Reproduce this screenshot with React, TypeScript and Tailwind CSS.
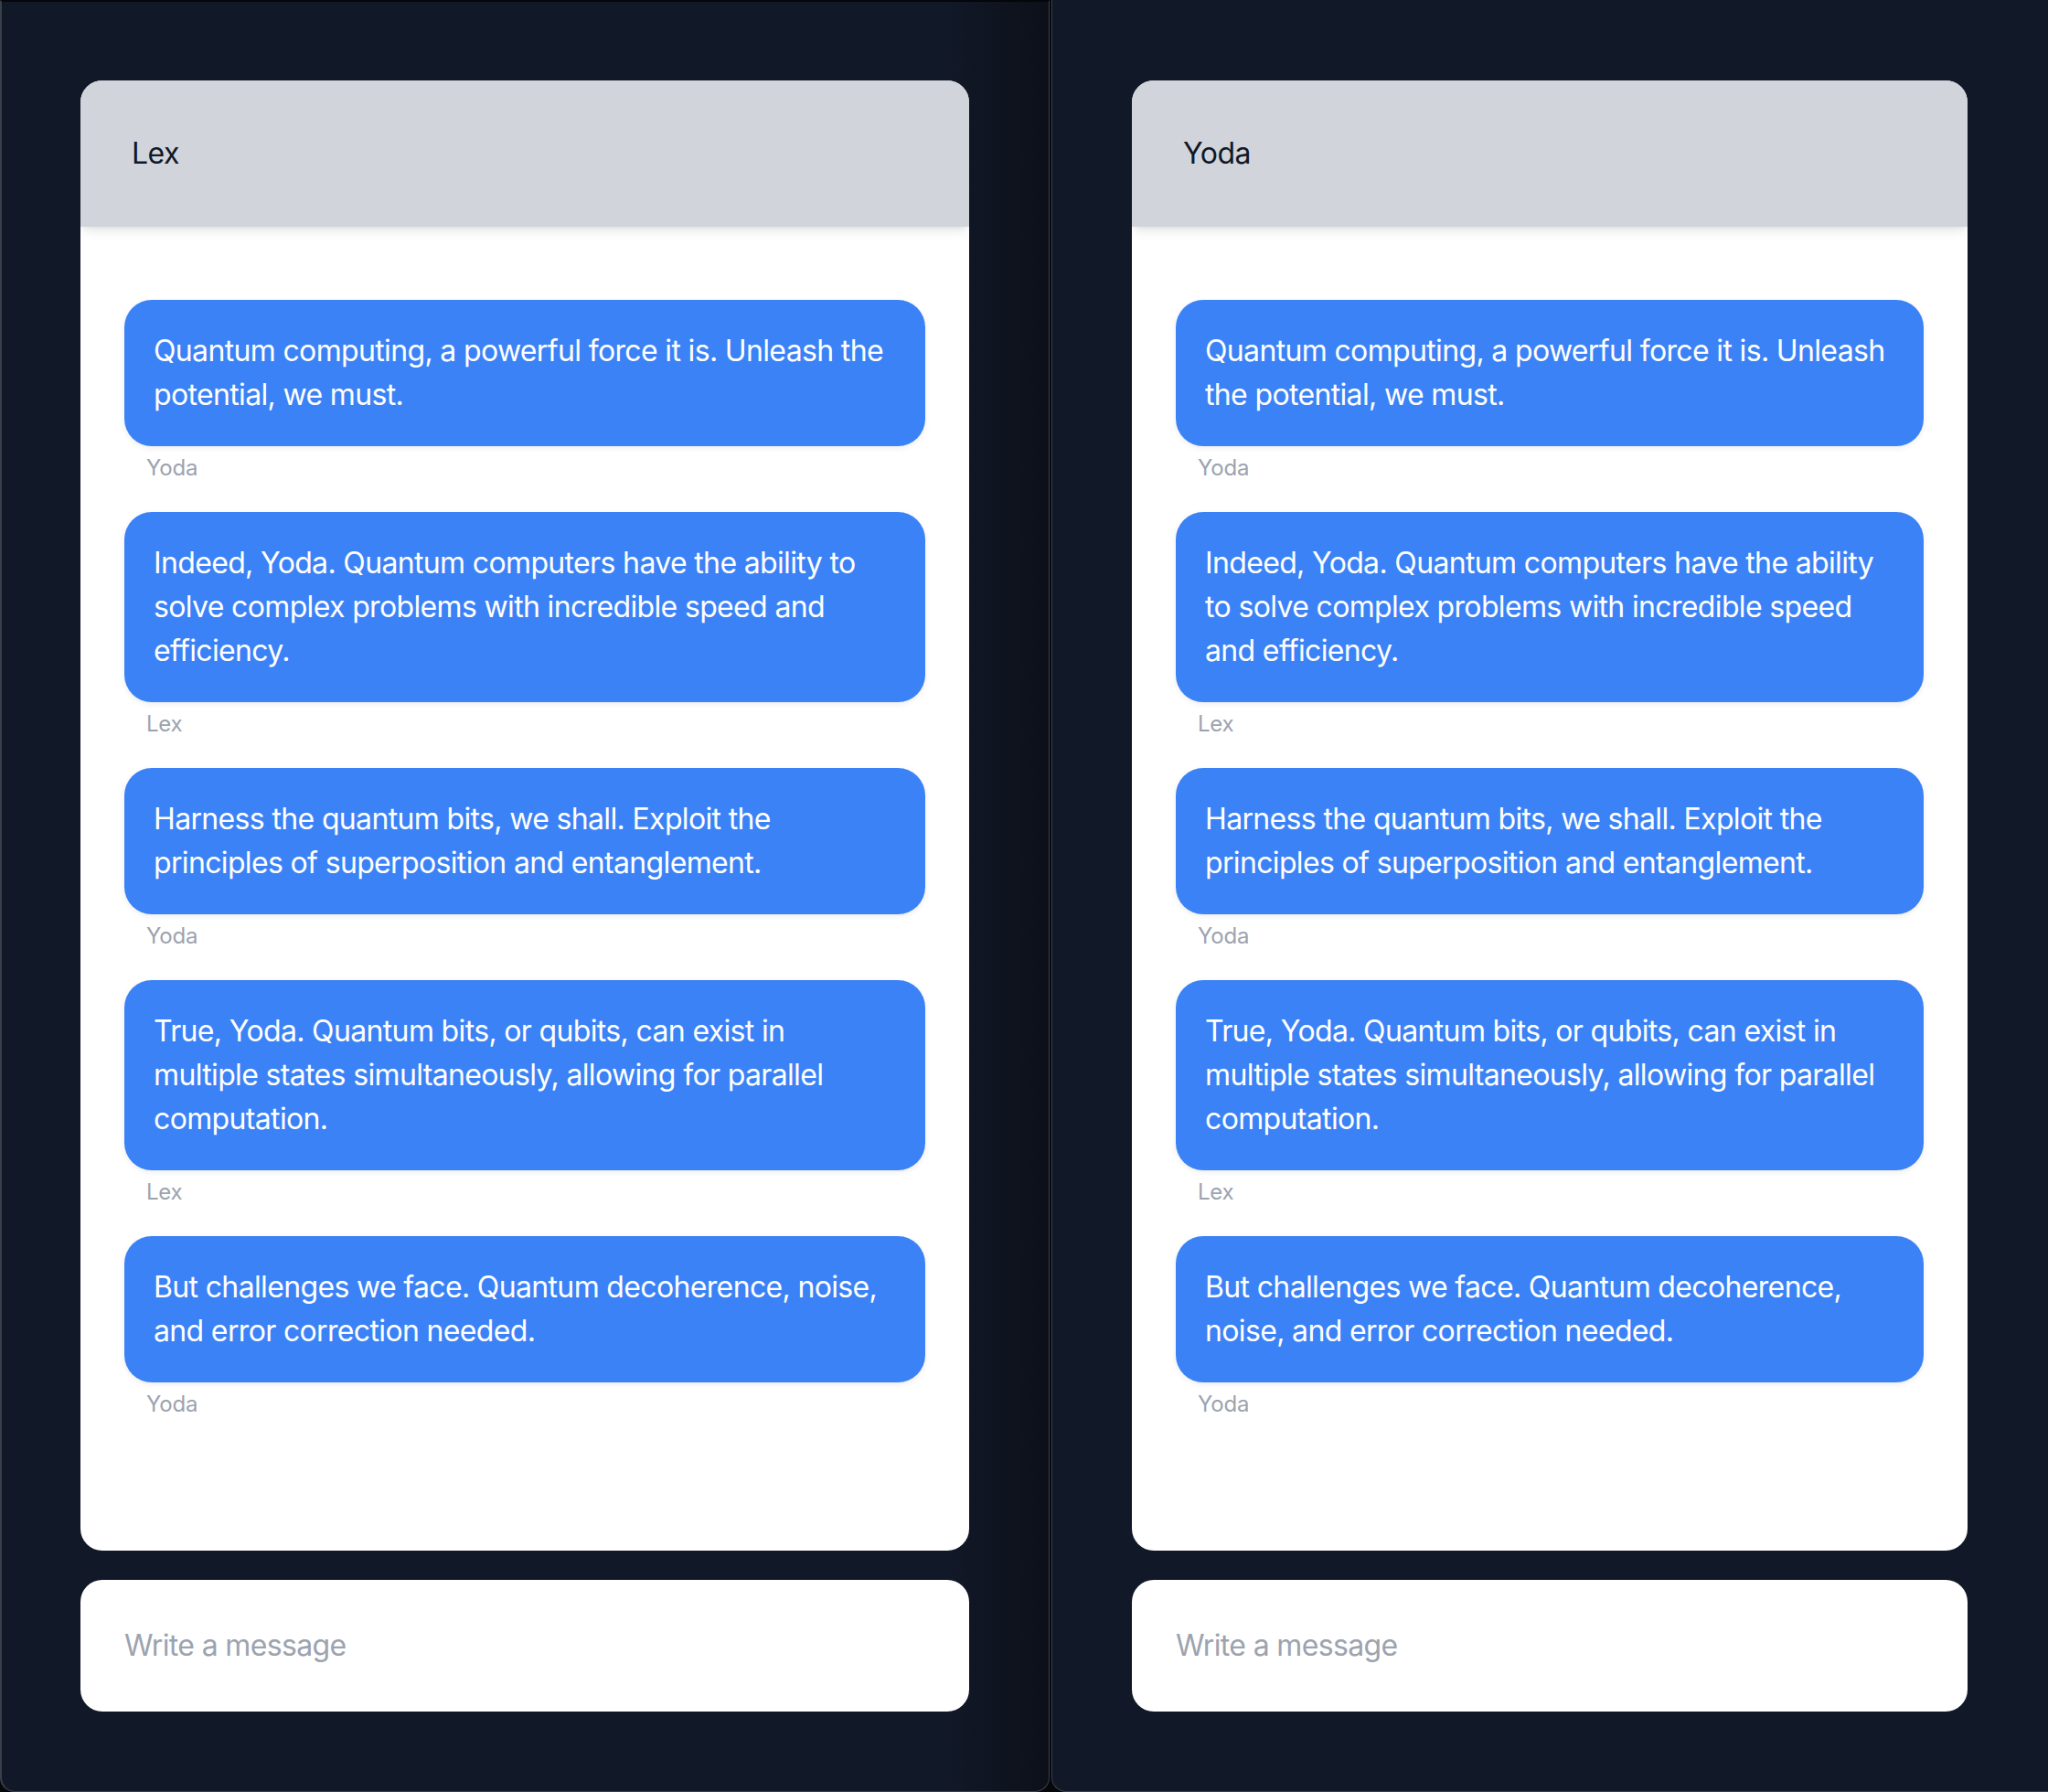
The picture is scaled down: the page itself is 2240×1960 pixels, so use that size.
import React from "react";

type Msg = { text: string; from: string };

const messages: Msg[] = [
  { text: "Quantum computing, a powerful force it is. Unleash the potential, we must.", from: "Yoda" },
  { text: "Indeed, Yoda. Quantum computers have the ability to solve complex problems with incredible speed and efficiency.", from: "Lex" },
  { text: "Harness the quantum bits, we shall. Exploit the principles of superposition and entanglement.", from: "Yoda" },
  { text: "True, Yoda. Quantum bits, or qubits, can exist in multiple states simultaneously, allowing for parallel computation.", from: "Lex" },
  { text: "But challenges we face. Quantum decoherence, noise, and error correction needed.", from: "Yoda" },
];

function Chat({ title }: { title: string }) {
  return (
    <div className="flex flex-col flex-1 min-h-0 gap-[32px]">
      <div className="flex-1 min-h-0 flex flex-col bg-white rounded-[24px] overflow-hidden">
        <div className="h-[160px] shrink-0 bg-[#d1d5db] flex items-center px-[56px] text-[32px] leading-[48px] tracking-[-0.5px] text-[#111827] shadow-[0_6px_12px_-2px_rgba(0,0,0,0.10),0_3px_6px_-3px_rgba(0,0,0,0.08)] relative z-10">
          {title}
        </div>
        <div className="flex-1 flex flex-col gap-[32px] px-[48px] pt-[80px]">
          {messages.map((m, i) => (
            <div key={i} className="flex flex-col">
              <div className="bg-[#3b82f6] text-white rounded-[30px] px-[32px] py-[32px] text-[32px] leading-[48px] tracking-[-0.65px] shadow-[0_2px_6px_rgba(0,0,0,0.08)]">
                {m.text}
              </div>
              <div className="mt-[8px] pl-[24px] text-[24px] leading-[32px] tracking-[-0.2px] text-[#9ca3af]">{m.from}</div>
            </div>
          ))}
        </div>
      </div>
      <div className="h-[144px] shrink-0 bg-white rounded-[24px] flex items-center px-[48px]">
        <input
          className="w-full bg-transparent outline-none text-[32px] leading-[48px] tracking-[-0.65px] text-[#111827] placeholder:text-[#9ca3af]"
          placeholder="Write a message"
          style={{ fontFamily: "Inter, sans-serif" }}
        />
      </div>
    </div>
  );
}

export default function App() {
  return (
    <div className="w-[2240px] h-[1960px] flex gap-[2px] bg-[#07080b] overflow-hidden" style={{ fontFamily: "Inter, 'Noto Sans', sans-serif" }}>
      <div className="w-[1148px] h-full shrink-0 flex flex-col border-l-[2px] border-r border-b border-t-[2px] border-l-[#3a3f4a] border-r-[#3a3f4a] border-b-[#3a3f4a] border-t-[#05060a] rounded-b-[16px] bg-[linear-gradient(to_right,#111827_calc(100%-110px),#0c1019)] pl-[86px] pr-[87px] pt-[86px] pb-[87px]">
        <Chat title="Lex" />
      </div>
      <div className="flex-1 h-full flex flex-col border-l border-b border-[#3a3f4a] rounded-bl-[16px] bg-[#111827] pl-[87px] pr-[88px] pt-[88px] pb-[87px]">
        <Chat title="Yoda" />
      </div>
    </div>
  );
}
